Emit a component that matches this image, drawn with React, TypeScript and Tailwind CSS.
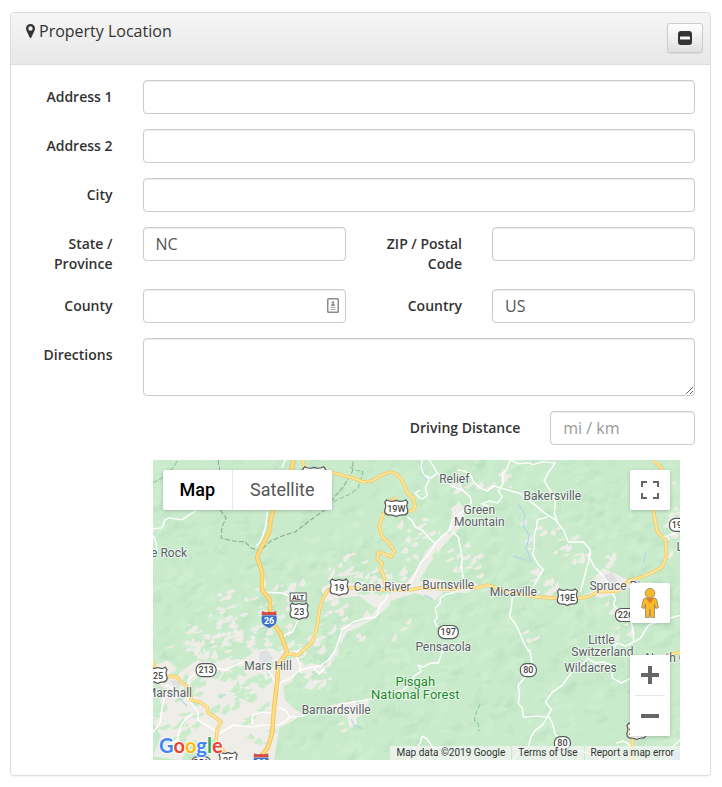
import { ReactNode } from 'react';

const inputClass =
  'block w-full h-[34px] px-3 text-base leading-5 text-[#555] bg-white border border-[#ccc] rounded shadow-[inset_0_1px_1px_rgba(0,0,0,0.075)] placeholder:text-[#999] outline-none focus:border-[#66afe9]';

function Label({ htmlFor, className, children }: { htmlFor: string; className: string; children: ReactNode }) {
  return (
    <label htmlFor={htmlFor} className={`px-[15px] pt-[7px] text-right text-sm leading-5 font-semibold ${className}`}>
      {children}
    </label>
  );
}

// small seeded generator so the relief shading is the same on every render
function random(seed: number) {
  let s = seed;
  return () => {
    s = (s * 16807) % 2147483647;
    return s / 2147483647;
  };
}

type Patch = { d: string; fill: string; opacity: number };

function facet(rand: () => number, x: number, y: number, size: number) {
  const len = size * (0.5 + rand());
  const wide = size * (0.3 + rand() * 0.5);
  const tilt = -0.2 - rand() * 0.9;
  const dx = Math.cos(tilt) * len;
  const dy = Math.sin(tilt) * len;
  const p = (n: number) => n.toFixed(1);
  return `M${p(x)} ${p(y)}L${p(x + dx)} ${p(y + dy)}L${p(x + dx * 0.8 + wide * 0.6)} ${p(y + dy * 0.3)}L${p(x + wide)} ${p(y + wide * 0.3)}Z`;
}

function scatter(seed: number, areas: number[][], fill: string, opacity: number, size: number): Patch[] {
  const rand = random(seed);
  return areas.flatMap(([cx, cy, rx, ry, count]) =>
    Array.from({ length: count }, () => {
      const x = cx + (rand() + rand() - 1) * rx;
      const y = cy + (rand() + rand() - 1) * ry;
      return { d: facet(rand, x, y, size), fill, opacity };
    })
  );
}

function buildRelief(): Patch[] {
  const rand = random(4217);
  const out: Patch[] = [];
  for (let i = 0; i < 1300; i++) {
    const dark = rand() > 0.5;
    out.push({
      d: facet(rand, rand() * 550 - 15, rand() * 320 - 5, 13),
      fill: dark ? '#b5debc' : '#d4f1d4',
      opacity: dark ? 0.3 : 0.35,
    });
  }
  return out;
}

// each area: centre x, centre y, spread x, spread y, number of patches
const clearings = scatter(
  911,
  [
    [50, 190, 60, 26, 40],
    [85, 145, 50, 22, 14],
    [60, 165, 40, 30, 22],
    [105, 175, 40, 26, 22],
    [140, 140, 30, 30, 14],
    [155, 205, 26, 34, 24],
    [190, 160, 34, 26, 20],
    [190, 110, 26, 20, 16],
    [235, 115, 30, 14, 14],
    [265, 80, 28, 26, 18],
    [310, 100, 24, 26, 14],
    [385, 78, 24, 22, 8],
    [375, 125, 26, 22, 9],
    [405, 96, 22, 26, 8],
    [440, 105, 26, 26, 9],
    [470, 165, 30, 22, 12],
    [300, 30, 26, 16, 8],
    [340, 18, 18, 14, 6],
    [515, 60, 10, 46, 12],
    [190, 255, 18, 22, 10],
    [372, 180, 8, 16, 4],
    [250, 170, 14, 14, 3],
    [12, 245, 24, 50, 20],
  ],
  '#efede8',
  0.95,
  8
);

const lowland =
  'M0 206L14 200L28 212L44 200L62 203L78 196L88 200L104 190L118 188L126 192L140 180L154 186L146 196L152 206L143 213L139 222L130 226L132 240L140 248L150 254L138 262L126 268L121 300L58 300L52 284L40 280L28 300L0 296L8 276L0 262L14 252L6 240L18 232L0 222Z' +
  'M146 209L158 203L172 206L184 188L188 174L196 165L214 160L224 148L228 140L238 136L236 146L222 158L204 168L194 172L184 192L176 206L160 211L148 214Z' +
  'M168 128L184 120L200 124L224 118L240 122L258 124L276 118L300 122L318 120L326 126L314 133L290 132L282 140L262 133L240 140L222 148L206 136L186 138L172 142Z' +
  'M252 124L266 106L272 92L284 80L294 70L299 58L298 48L306 42L312 50L306 68L290 86L276 104L264 124Z' +
  'M434 134L444 128L442 116L450 108L462 114L474 120L484 118L476 128L460 134L448 138Z' +
  'M176 246L190 242L206 244L218 238L214 246L202 252L204 264L196 268L194 256L182 252Z';

const thickets = scatter(
  3307,
  [
    [20, 225, 34, 30, 12],
    [75, 215, 46, 24, 17],
    [100, 238, 34, 30, 16],
    [60, 240, 40, 20, 14],
    [80, 275, 46, 22, 7],
    [20, 270, 30, 30, 14],
    [140, 200, 18, 20, 10],
    [205, 132, 30, 10, 10],
    [280, 126, 40, 8, 9],
    [185, 185, 20, 24, 8],
    [285, 85, 18, 26, 5],
  ],
  '#c9edcb',
  1,
  10
);

const relief = buildRelief();

const localRoads = [
  'M0 69L9 68L12 60L16 58L29 60L36 55L43 51',
  'M0 75L3 83L4 92',
  'M132 0L129 8',
  'M114 52L113 64L110 75L107 82L103 86M109 112L112 124L109 132L129 133L137 137',
  'M145 160L139 172L133 174L130 178',
  'M269 0L268 7L270 14L276 20L272 28L274 35L270 39L266 38L262 33L267 30',
  'M276 0L280 6L284 13L291 20L300 27L309 30L317 37L318 43L310 51L299 60L297 70L288 77L282 84L275 95L267 103L262 114L257 123',
  'M254 57L259 61L262 67L270 71L275 77L282 84M284 13L278 18L272 16',
  'M299 72L305 77L307 88L309 98L308 108L310 117L311 125L300 133L293 134L287 138L287 143L282 148L284 158L281 161L284 167',
  'M304 10L311 11L317 15L321 23L327 28L334 31L341 26L347 28L354 30L368 34',
  'M357 0L354 8L349 15L350 23L345 31L349 37L344 43L336 41L328 44L335 46',
  'M235 133L233 139L227 145L224 155L222 157L210 159L200 162L189 170L185 182L182 190L175 200L167 206L159 207L147 210L136 219L128 222L125 230',
  'M292 182L288 195L285 203L277 203L270 207L265 205L268 211L261 216L256 224L250 230L236 233L217 239L200 242L184 245',
  'M254 300L261 289L267 283L269 276L274 279L279 287L287 292L300 299L310 298',
  'M357 0L365 4L375 3L380 5L388 2L402 3L394 14L391 21L395 28L400 35L402 44L401 53L404 62',
  'M368 34L372 38L383 46L391 53L402 60L410 70L415 82L430 82L437 90L435 102L432 113L427 132',
  'M435 96L441 107L448 114L454 122L458 132L462 138L460 145L466 151L474 153',
  'M394 57L384 60L383 68L381 75L381 88L379 94L384 103L390 110L385 118L380 127',
  'M527 70L517 75L510 77M359 137L358 148L356 156L362 164L367 174L371 184L377 193L379 206',
  'M372 217L365 225L366 235L365 243L369 248L370 257L384 256L394 257L389 265L382 270L377 278L375 287L365 293L360 300',
  'M394 254L399 263L402 275L408 278M394 257L398 249L392 242L399 232L409 225L414 218L420 210L429 205L434 198L442 203L450 202L458 205L459 218L468 223L477 218',
  'M478 163L480 172L480 182L472 186L464 183L458 190L445 193M480 182L487 178L495 165L510 160L527 155',
  'M37 228L35 220L42 213M64 208L72 210L80 206L90 202',
  'M12 225L25 230L36 240L45 252L45 260L55 266L64 272M40 253L33 258L27 267L24 280L15 285M14 230L9 247L8 257L7 263L0 272',
  'M67 273L80 265L99 267L110 265L125 265L132 261L137 257L149 256L158 251M100 265L99 258L101 254L110 252L120 253M125 247L132 250L137 257',
  'M112 205L117 213L121 220L125 225M147 213L147 205L143 196L145 190M160 207L166 214L172 208',
  'M463 283L470 281L479 286M527 279L519 287L512 300M420 290L440 294L449 300',
];

const highways = [
  'M140 0L139 8L133 28L120 50L117 63L117 70L107 90L104 97L109 112L109 130L117 140L117 152L120 163L127 173L134 192L125 205L124 223L121 247L119 273L115 287L109 295',
];

const mainRoads = [
  'M134 194L145 195L159 182L164 167L166 150L170 138L175 130L184 127L200 128L215 129L230 130L257 130L267 128L300 129L313 127L323 128L334 125L341 127L347 130L362 133L384 137L400 138L425 138L435 137L444 132L464 131L475 121L488 117L500 112L509 107L513 95L512 80L504 72L500 52L505 28L508 8L500 1',
  'M149 0L152 10M174 15L179 13L185 14L190 16L200 18L210 22L219 21L227 16L237 12L243 14L248 20L252 27L254 33L260 38L262 47L259 51L244 50L237 41L243 38M237 52L230 54L228 60L226 67L229 77L235 82L241 91L238 97L234 95L225 92L224 99L229 103L227 109L230 114L233 130',
  'M0 200L2 208L12 216L24 217L29 223L37 228L38 240L47 242L54 247L55 253L62 257L68 262L64 270L63 282L72 292',
  'M479 276L479 290L478 300M527 192L505 197',
];

type Town = { x: number; y: number; text: string; anchor?: 'start' | 'middle' | 'end' };

const towns: Town[] = [
  { x: 301, y: 23, text: 'Relief', anchor: 'middle' },
  { x: 399, y: 40, text: 'Bakersville', anchor: 'middle' },
  { x: 326, y: 54, text: 'Green', anchor: 'middle' },
  { x: 326, y: 66, text: 'Mountain', anchor: 'middle' },
  { x: 34, y: 97, text: 'Little Rock', anchor: 'end' },
  { x: 229, y: 131, text: 'Cane River', anchor: 'middle' },
  { x: 295, y: 129, text: 'Burnsville', anchor: 'middle' },
  { x: 360, y: 136, text: 'Micaville', anchor: 'middle' },
  { x: 436, y: 130, text: 'Spruce Pine' },
  { x: 115, y: 210, text: 'Mars Hill', anchor: 'middle' },
  { x: 39, y: 237, text: 'Marshall', anchor: 'end' },
  { x: 183, y: 254, text: 'Barnardsville', anchor: 'middle' },
  { x: 290, y: 191, text: 'Pensacola', anchor: 'middle' },
  { x: 448, y: 184, text: 'Little', anchor: 'middle' },
  { x: 449, y: 196, text: 'Switzerland', anchor: 'middle' },
  { x: 437, y: 212, text: 'Wildacres', anchor: 'middle' },
  { x: 492, y: 202, text: 'North Cove' },
  { x: 523, y: 91, text: 'Linville' },
];

function UsShield({ x, y, w, text }: { x: number; y: number; w: number; text: string }) {
  const h = w / 2;
  return (
    <g transform={`translate(${x} ${y})`}>
      <path
        d={`M${-h + 2} -8Q${-h / 2} -5.5 0 -7.5Q${h / 2} -5.5 ${h - 2} -8L${h} -5.5Q${h - 2} -2 ${h} 2Q${h + 0.5} 6 ${h - 3} 7Q3 6.5 0 8.5Q-3 6.5 ${-h + 3} 7Q${-h - 0.5} 6 ${-h} 2Q${-h + 2} -2 ${-h} -5.5Z`}
        fill="#fff"
        stroke="#58595b"
        strokeWidth="1.2"
      />
      <text y="4" textAnchor="middle" fontSize="9" fontWeight="500" fill="#444">{text}</text>
    </g>
  );
}

function StateRoute({ x, y, w, text }: { x: number; y: number; w: number; text: string }) {
  return (
    <g transform={`translate(${x} ${y})`}>
      <rect x={-w / 2} y="-6.5" width={w} height="13" rx="6" fill="#fff" stroke="#58595b" strokeWidth="1.2" />
      <text y="3" textAnchor="middle" fontSize="9" fontWeight="500" fill="#444">{text}</text>
    </g>
  );
}

function Interstate({ x, y, text }: { x: number; y: number; text: string }) {
  return (
    <g transform={`translate(${x} ${y})`}>
      <path d="M-7.5 -4Q-9 3 -6 6Q-3 8 0 9.5Q3 8 6 6Q9 3 7.5 -4Z" fill="#3d72c4" stroke="#fff" strokeWidth="0.6" />
      <path d="M-7.5 -4L-7 -8Q-3.5 -6 0 -7.5Q3.5 -6 7 -8L7.5 -4Z" fill="#d84b45" />
      <text y="4.5" textAnchor="middle" fontSize="9" fontWeight="700" fill="#fff">{text}</text>
    </g>
  );
}

function Patches({ items }: { items: Patch[] }) {
  return items.map((p, i) => <path key={i} d={p.d} fill={p.fill} fillOpacity={p.opacity} />);
}

function MapCanvas() {
  return (
    <svg
      viewBox="0 0 527 300"
      preserveAspectRatio="xMidYMid slice"
      className="block w-full h-full font-['Roboto',sans-serif]"
      role="img"
      aria-label="Map of the area around Burnsville"
    >
      <rect width="527" height="300" fill="#c9ebcc" />
      <Patches items={relief} />
      <path d={lowland} fill="#efede8" />
      <Patches items={clearings} />
      <Patches items={thickets} />
      <path d="M106 192l8 -2l6 8l-6 6l-8 -3zM450 116l8 -4l6 9l-8 5zM17 220l8 1l3 6l-7 -1z" fill="#dedfe3" />
      <path d="M521 292h6v8h-9z" fill="#b5d3ef" />
      <g fill="none" stroke="#a9d3ee" strokeWidth="1">
        <path d="M269 0L269 14L274 20M365 44L372 55L370 66L376 76L373 88L378 102M371 100L360 96M271 135L279 139M66 238L73 234M198 259L201 265L210 269M490 104L492 92M26 238L34 246" />
      </g>
      <g fill="none" stroke="#8aa894" strokeWidth="1" strokeDasharray="5 2">
        <path d="M65 0L67 12M67 50L73 58L69 67L68 78L80 81L92 82L98 88L107 91L118 81L129 76L142 72L155 62L163 56L172 50L179 40L190 27L199 12L200 0" />
        <path d="M0 23L9 18L20 8L25 0M180 42L197 34L205 28L210 12L202 10L197 7M327 244L323 252L321 260L325 264L326 271" stroke="#86c692" />
      </g>
      <g fill="none" stroke="#fff" strokeWidth="1.4" strokeLinejoin="round">
        {localRoads.map((d) => (
          <path key={d} d={d} />
        ))}
      </g>
      <g fill="none" strokeLinejoin="round">
        {mainRoads.map((d) => (
          <path key={d} d={d} stroke="#f3c85f" strokeWidth="3.4" />
        ))}
        {highways.map((d) => (
          <path key={d} d={d} stroke="#f1c14f" strokeWidth="4.4" />
        ))}
        {mainRoads.map((d) => (
          <path key={d} d={d} stroke="#ffe498" strokeWidth="2" />
        ))}
        {highways.map((d) => (
          <path key={d} d={d} stroke="#fddc85" strokeWidth="2.8" />
        ))}
      </g>

      <UsShield x={161} y={15} w={23} text="23" />
      <UsShield x={243} y={48} w={23} text="19W" />
      <UsShield x={186} y={127} w={18} text="19" />
      <UsShield x={414} y={137} w={20} text="19E" />
      <UsShield x={146} y={151} w={18} text="23" />
      <UsShield x={5} y={215} w={18} text="25" />
      <UsShield x={75} y={300} w={18} text="25" />
      <UsShield x={483} y={271} w={19} text="221" />
      <rect x="137" y="133" width="16" height="8" fill="#fff" stroke="#58595b" />
      <text x="145" y="140" textAnchor="middle" fontSize="7" fontWeight="700" fill="#444">ALT</text>
      <StateRoute x={53} y={210} w={20} text="213" />
      <StateRoute x={48} y={303} w={19} text="251" />
      <StateRoute x={295} y={172} w={20} text="197" />
      <StateRoute x={375} y={210} w={16} text="80" />
      <StateRoute x={409} y={283} w={16} text="80" />
      <StateRoute x={472} y={155} w={20} text="226" />
      <StateRoute x={526} y={65} w={20} text="194" />
      <Interstate x={116} y={159} text="26" />
      <Interstate x={108} y={301} text="26" />

      <g fill="#5c5f66" stroke="#fff" strokeWidth="2" strokeOpacity="0.6" strokeLinejoin="round" paintOrder="stroke">
        {towns.map((t) => (
          <text key={t.text} x={t.x} y={t.y} fontSize="12" textAnchor={t.anchor || 'start'}>{t.text}</text>
        ))}
        <text x="262" y="226" textAnchor="middle" fontSize="13" fill="#1f8a2e">Pisgah</text>
        <text x="262" y="239" textAnchor="middle" fontSize="13" fill="#1f8a2e">National Forest</text>
      </g>
    </svg>
  );
}

function Pegman() {
  return (
    <svg viewBox="0 0 18 30" className="w-[18px] h-[30px]" aria-hidden="true">
      <path
        d="M4.500 10H13.500Q15.300 10.300 15.800 12L17.400 19.500L14.800 20.500L13.500 16.500V29.500H9.800L9 21.500L8.200 29.500H4.500V16.500L3.200 20.500L.6 19.500L2.200 12Q2.700 10.300 4.500 10Z"
        fill="#fbb829"
        stroke="#8f8063"
        strokeWidth="0.8"
      />
      <path d="M4.800 10.200L9 15.500L13.200 10.200Z" fill="#e0802a" />
      <circle cx="9" cy="5.200" r="4.800" fill="#fbb829" stroke="#8f8063" strokeWidth="0.8" />
    </svg>
  );
}

const mapButton = 'flex items-center justify-center bg-white';
const mapShadow = 'rounded-xs shadow-[0_1px_4px_-1px_rgba(0,0,0,0.3)]';

function LocationMap() {
  return (
    <div className="relative h-[300px] overflow-hidden font-['Roboto',sans-serif]">
      <MapCanvas />

      <div className={`absolute top-[10px] left-[10px] flex h-10 bg-white text-lg ${mapShadow}`}>
        <button type="button" className="px-[17px] font-medium text-black">Map</button>
        <button type="button" className="px-[17px] border-l border-[#e6e6e6] text-[#565656]">Satellite</button>
      </div>

      <button type="button" aria-label="Toggle fullscreen view" className={`absolute top-[10px] right-[10px] size-10 ${mapButton} ${mapShadow}`}>
        <svg viewBox="0 0 18 18" className="size-[18px]" fill="none" stroke="#666" strokeWidth="2">
          <path d="M1 6V1H6M12 1H17V6M17 12V17H12M6 17H1V12" />
        </svg>
      </button>

      <div className="absolute right-[10px] bottom-6 flex flex-col gap-8">
        <button type="button" aria-label="Street View" className={`size-10 ${mapButton} ${mapShadow}`}>
          <Pegman />
        </button>
        <div className={`bg-white ${mapShadow}`}>
          <button type="button" aria-label="Zoom in" className={`size-10 ${mapButton}`}>
            <svg viewBox="0 0 18 18" className="size-[18px]" fill="#666">
              <path d="M7 0h4v7h7v4h-7v7h-4v-7h-7v-4h7z" />
            </svg>
          </button>
          <div className="mx-[5px] h-px bg-[#e6e6e6]" />
          <button type="button" aria-label="Zoom out" className={`size-10 ${mapButton}`}>
            <svg viewBox="0 0 18 18" className="size-[18px]" fill="#666">
              <path d="M0 7h18v4h-18z" />
            </svg>
          </button>
        </div>
      </div>

      <a href="#google" aria-label="Google" className="absolute left-[6px] bottom-0">
        <svg viewBox="0 0 70 28" className="w-[70px] h-7 font-['Lato',sans-serif]">
          <text x="0" y="21" fontSize="20" fontWeight="700" stroke="#fff" strokeWidth="2" strokeOpacity="0.8" paintOrder="stroke">
            <tspan fill="#4285f4">G</tspan>
            <tspan fill="#ea4335">o</tspan>
            <tspan fill="#fbbc05">o</tspan>
            <tspan fill="#4285f4">g</tspan>
            <tspan fill="#34a853">l</tspan>
            <tspan fill="#ea4335">e</tspan>
          </text>
        </svg>
      </a>

      <div className="absolute right-0 bottom-0 flex h-[14px] gap-px text-[10px] leading-[14px] text-[#333]">
        <span className="bg-[#f5f5f5]/70 px-[6px]">Map data ©2019 Google</span>
        <a href="#terms" className="bg-[#f5f5f5]/70 px-[6px]">Terms of Use</a>
        <a href="#report" className="bg-[#f5f5f5]/70 px-[6px]">Report a map error</a>
      </div>
    </div>
  );
}

export default function App() {
  return (
    <div className="bg-white py-3 pl-[10px] pr-[11px] font-['Open_Sans',sans-serif] text-[#333]">
      <section className="rounded border border-[#ddd] shadow-[0_1px_1px_rgba(0,0,0,0.05)]">
        <header className="flex items-start justify-between h-[52px] pt-[10px] pl-[15px] pr-[7px] rounded-t border-b border-[#ddd] bg-linear-to-b from-[#f5f5f5] to-[#e8e8e8]">
          <h3 className="flex items-center gap-1 text-base leading-4">
            <svg viewBox="0 0 9 14" className="w-[9px] h-[14px]" fill="#333" fillRule="evenodd" aria-hidden="true">
              <path d="M4.500 0A4.500 4.500 0 0 1 9 4.500C9 6 8.500 6.800 8 7.800L5.300 13.400Q4.500 14.400 3.700 13.400L1 7.800C.5 6.800 0 6 0 4.500A4.500 4.500 0 0 1 4.500 0ZM4.500 2.300A2.200 2.200 0 1 0 4.500 6.700A2.200 2.200 0 1 0 4.500 2.300Z" />
            </svg>
            Property Location
          </h3>
          <button
            type="button"
            aria-label="Collapse"
            className="flex items-center justify-center w-9 h-[30px] rounded-[3px] border border-[#ccc] bg-linear-to-b from-white to-[#e0e0e0] shadow-[0_1px_1px_rgba(0,0,0,0.075)]"
          >
            <svg viewBox="0 0 14 14" className="size-[14px]" aria-hidden="true">
              <rect width="14" height="14" rx="3" fill="#333" />
              <rect x="2" y="5.500" width="10" height="3" rx="0.600" fill="#f4f4f4" />
            </svg>
          </button>
        </header>

        <form className="grid grid-cols-12 gap-y-[15px] py-[15px]">
          <Label htmlFor="address1" className="col-span-2">Address 1</Label>
          <div className="col-span-10 px-[15px]">
            <input id="address1" type="text" className={inputClass} />
          </div>

          <Label htmlFor="address2" className="col-span-2">Address 2</Label>
          <div className="col-span-10 px-[15px]">
            <input id="address2" type="text" className={inputClass} />
          </div>

          <Label htmlFor="city" className="col-span-2">City</Label>
          <div className="col-span-10 px-[15px]">
            <input id="city" type="text" className={inputClass} />
          </div>

          <Label htmlFor="state" className="col-span-2">State / Province</Label>
          <div className="col-span-4 px-[15px]">
            <input id="state" type="text" defaultValue="NC" className={inputClass} />
          </div>
          <Label htmlFor="zip" className="col-span-2">ZIP / Postal Code</Label>
          <div className="col-span-4 px-[15px]">
            <input id="zip" type="text" className={inputClass} />
          </div>

          <Label htmlFor="county" className="col-span-2">County</Label>
          <div className="col-span-4 px-[15px]">
            <div className="relative">
              <input id="county" type="text" className={inputClass} />
              <svg viewBox="0 0 12 15" className="absolute top-[9px] right-[7px] w-3 h-[15px]" aria-hidden="true">
                <rect x="0.750" y="0.750" width="10.500" height="13.500" rx="0.800" fill="#fff" stroke="#8c8c8c" strokeWidth="1.500" />
                <circle cx="6" cy="4.500" r="1.300" fill="#8c8c8c" />
                <path d="M4 8Q4 5.500 6 5.500Q8 5.500 8 8ZM3.500 9.200h5v.8h-5zM3.500 11h5v.8h-5z" fill="#8c8c8c" />
              </svg>
            </div>
          </div>
          <Label htmlFor="country" className="col-span-2">Country</Label>
          <div className="col-span-4 px-[15px]">
            <input id="country" type="text" defaultValue="US" className={inputClass} />
          </div>

          <Label htmlFor="directions" className="col-span-2">Directions</Label>
          <div className="col-span-10 px-[15px]">
            <textarea
              id="directions"
              className="block w-full h-[58px] px-3 py-1.5 text-base leading-5 text-[#555] bg-white border border-[#ccc] rounded shadow-[inset_0_1px_1px_rgba(0,0,0,0.075)] outline-none focus:border-[#66afe9]"
            />
          </div>

          <Label htmlFor="distance" className="col-span-3 col-start-7">Driving Distance</Label>
          <div className="col-span-3 px-[15px]">
            <input id="distance" type="text" placeholder="mi / km" className={inputClass} />
          </div>

          <div className="col-span-10 col-start-3 pl-[25px] pr-[30px]">
            <LocationMap />
          </div>
        </form>
      </section>
    </div>
  );
}
